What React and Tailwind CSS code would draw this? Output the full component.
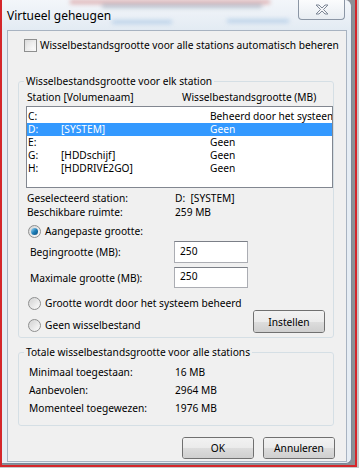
import React from 'react';

const font = { fontFamily: '"Noto Sans", "DejaVu Sans", sans-serif' };

const Checkbox = () => (
  <span className="w-[13px] h-[13px] border border-[#8e8f8f] bg-gradient-to-br from-[#dcdcdc] to-[#fbfbfb] shrink-0 p-[2px]">
    <span className="block w-full h-full bg-gradient-to-br from-[#e4e4e4] to-[#fafafa]" />
  </span>
);

const Radio = ({ checked }) => (
  <span className="w-[13px] h-[13px] rounded-full border border-[#8e8f8f] bg-gradient-to-br from-[#d4d4d4] to-[#fbfbfb] shrink-0 flex items-center justify-center">
    {checked ? (
      <span className="w-[7px] h-[7px] rounded-full bg-gradient-to-br from-[#a5e1f8] via-[#1d7fb8] to-[#0b4f80]" />
    ) : (
      <span className="w-[7px] h-[7px] rounded-full bg-gradient-to-br from-[#d8d8d8] to-[#f6f6f6]" />
    )}
  </span>
);

const Button = ({ children, w = 'w-[72px]', h = 'h-[22px]' }) => (
  <div className={`${w} ${h} rounded-[3px] border border-[#707070] flex flex-col overflow-hidden relative shrink-0`}>
    <div className="flex-1 bg-gradient-to-b from-[#f2f2f2] to-[#ebebeb]" />
    <div className="flex-1 bg-gradient-to-b from-[#dddddd] to-[#cfcfcf]" />
    <div className="absolute inset-0 flex items-center justify-center text-black">{children}</div>
  </div>
);

const drives = [
  { d: 'C:', name: '', size: 'Beheerd door het systeem' },
  { d: 'D:', name: '[SYSTEM]', size: 'Geen', sel: true },
  { d: 'E:', name: '', size: 'Geen' },
  { d: 'G:', name: '[HDDschijf]', size: 'Geen' },
  { d: 'H:', name: '[HDDRIVE2GO]', size: 'Geen' },
];

export default function App() {
  return (
    <div className="w-[359px] h-[468px] bg-[#c9c9c9] text-[10.2px] leading-[14px] text-black" style={font}>
      <div className="w-[357px] h-[467px] border-l-2 border-r-2 border-b-2 border-[#d4262b] bg-[#8c8f94] overflow-hidden">
        {/* ── WINDOW ─────────────────────────────────── */}
        <div className="w-[350px] h-[464px] rounded-tr-[7px] rounded-br-[6px] border-r border-b border-[#7a8798] bg-[#e6edf4] flex flex-col overflow-hidden">
          {/* ── TITLE_BAR ──────────────────────────────── */}
          <div className="relative h-[30px] flex items-start shrink-0 bg-gradient-to-b from-[#f3f6fa] to-[#e3ebf3]">
            {/* blurred content seen through the glass */}
            <div className="absolute left-[68px] top-0 w-[200px] h-[4px] bg-[#d08080] blur-[2px] opacity-60" />
            <div className="absolute left-[100px] top-[4px] w-[160px] h-[4px] bg-[#6d7f95] blur-[2px] opacity-40" />
            <div className="absolute left-[110px] top-[20px] w-[60px] h-[4px] bg-[#9fc0e2] blur-[2px] opacity-60" />
            <div className="absolute left-[225px] top-[19px] w-[62px] h-[4px] bg-[#9fc0e2] blur-[2px] opacity-60" />
            <span className="relative text-[12px] ml-[5px] mt-[9px] leading-[14px]">Virtueel geheugen</span>
            <div className="relative ml-auto mr-[6px] w-[47px] h-[20px] border border-t-0 border-[#8b96a5] rounded-b-[4px] bg-gradient-to-b from-[#fbfcfd] to-[#e8edf2] flex items-center justify-center">
              <svg width="14" height="11" viewBox="0 0 14 11">
                <path d="M1 1h3l3 3 3-3h3l-4.5 4.5 4.5 4.5h-3l-3-3-3 3h-3l4.5-4.5z" fill="#f4f5f7" stroke="#7d8796" strokeWidth="1" strokeLinejoin="round" />
              </svg>
            </div>
          </div>

          {/* ── CLIENT ─────────────────────────────────── */}
          <div className="ml-[5px] w-[340px] h-[432px] border border-[#a8b3c1] bg-[#f0f0f0] flex flex-col pl-[10px] pr-[12px]">
            <div className="flex items-center gap-[3px] mt-[6px] ml-[6px] h-[16px] whitespace-nowrap">
              <Checkbox />
              <span>Wisselbestandsgrootte voor alle stations automatisch beheren</span>
            </div>

            <fieldset className="mt-[21px] border border-[#d5dfe5] rounded-[3px] pl-[8px] pr-0 pb-[2px] min-w-0">
              <legend className="-ml-[3px] px-[2px] leading-[14px]">Wisselbestandsgrootte voor elk station</legend>
              <div className="flex h-[14px] mt-[2px]">
                <span className="w-[155px]">Station [Volumenaam]</span>
                <span>Wisselbestandsgrootte (MB)</span>
              </div>
              <div className="mt-[2px] -ml-[1px] h-[82px] border border-[#828790] bg-white pt-[3px] overflow-hidden">
                {drives.map((r) => (
                  <div
                    key={r.d}
                    className={`flex h-[13px] leading-[13px] whitespace-nowrap pl-[1px] ${r.sel ? 'bg-[#3399ff] text-white' : ''}`}
                  >
                    <span className="w-[33px] shrink-0">{r.d}</span>
                    <span className="w-[149px] shrink-0">{r.name}</span>
                    <span>{r.size}</span>
                  </div>
                ))}
              </div>
              <div className="flex h-[14px] mt-[3px]">
                <span className="w-[148px]">Geselecteerd station:</span>
                <span>D:&nbsp;&nbsp;[SYSTEM]</span>
              </div>
              <div className="flex h-[14px]">
                <span className="w-[148px]">Beschikbare ruimte:</span>
                <span>259 MB</span>
              </div>
              <div className="flex items-center gap-[4px] h-[14px] mt-[5px] ml-[1px]">
                <Radio checked />
                <span>Aangepaste grootte:</span>
              </div>
              <div className="flex items-center h-[22px] mt-[3px] ml-[3px]">
                <span className="w-[144px]">Begingrootte (MB):</span>
                <div className="w-[74px] h-[22px] border border-[#abadb3] border-t-[#7b7f87] bg-white pl-[5px] pt-[2px]">250</div>
              </div>
              <div className="flex items-center h-[21px] mt-[4px] ml-[3px]">
                <span className="w-[144px]">Maximale grootte (MB):</span>
                <div className="w-[74px] h-[21px] border border-[#abadb3] border-t-[#7b7f87] bg-white pl-[5px] pt-[1px]">250</div>
              </div>
              <div className="flex items-center gap-[4px] h-[14px] mt-[8px] ml-[1px]">
                <Radio />
                <span>Grootte wordt door het systeem beheerd</span>
              </div>
              <div className="flex items-end h-[25px] mr-[8px]">
                <div className="flex items-center gap-[4px] h-[14px] ml-[1px] mb-[3px]">
                  <Radio />
                  <span>Geen wisselbestand</span>
                </div>
                <div className="ml-auto mb-[2px]">
                  <Button w="w-[72px]" h="h-[23px]">Instellen</Button>
                </div>
              </div>
            </fieldset>

            <fieldset className="mt-[7px] border border-[#d5dfe5] rounded-[3px] pl-[10px] pb-[8px] min-w-0">
              <legend className="-ml-[5px] px-[2px] leading-[14px]">Totale wisselbestandsgrootte voor alle stations</legend>
              {[
                ['Minimaal toegestaan:', '16 MB'],
                ['Aanbevolen:', '2964 MB'],
                ['Momenteel toegewezen:', '1976 MB'],
              ].map(([k, v], i) => (
                <div key={k} className={`flex h-[18px] items-center ${i === 0 ? 'mt-[4px]' : ''}`}>
                  <span className="w-[146px]">{k}</span>
                  <span>{v}</span>
                </div>
              ))}
            </fieldset>

            <div className="flex justify-end gap-[9px] mt-[11px] -mr-[1px]">
              <Button>OK</Button>
              <Button>Annuleren</Button>
            </div>
          </div>
        </div>
      </div>
    </div>
  );
}
